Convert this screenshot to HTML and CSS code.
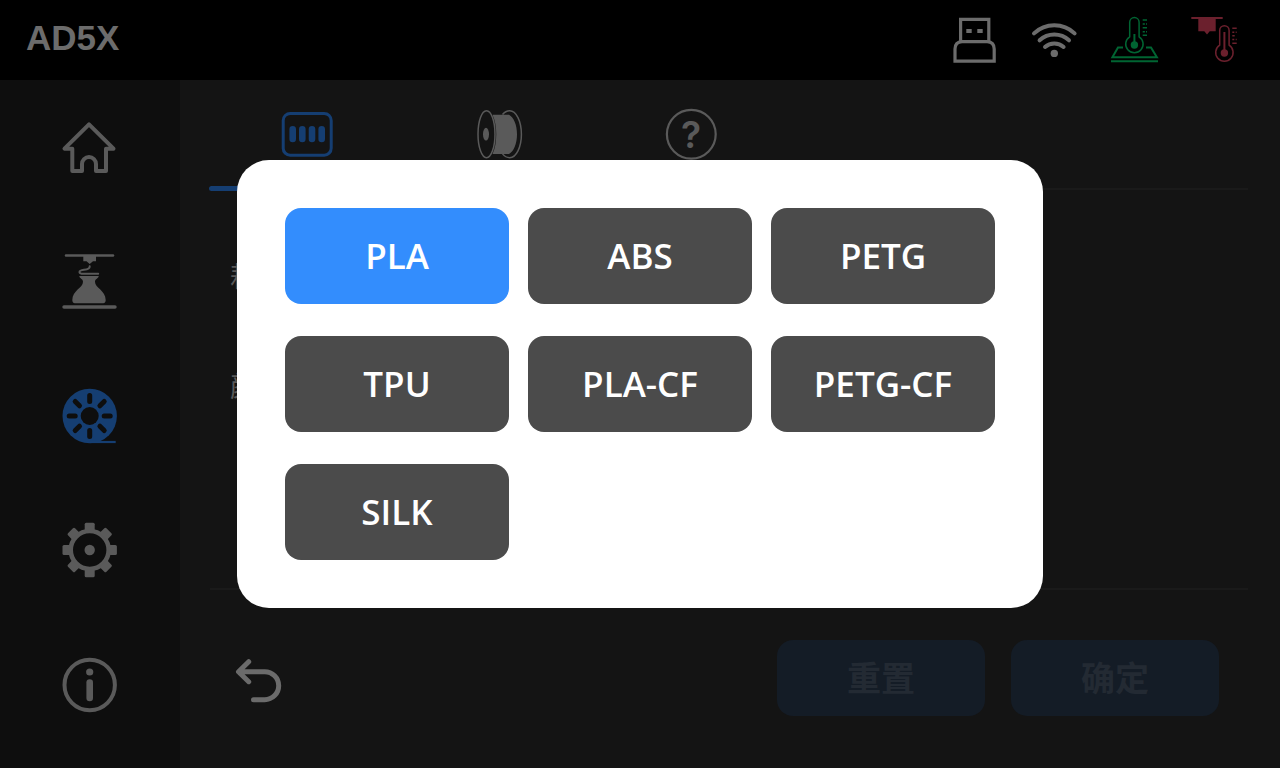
FILE: index.html
```
<!DOCTYPE html>
<html lang="zh-CN">
<head>
    <meta charset="UTF-8">
    <meta name="viewport" content="width=device-width, initial-scale=1.0">
    <title>AD5X</title>
    <link rel="stylesheet" href="styles.css">
</head>
<body>

<header class="topbar">
    <span class="model">AD5X</span>
    <div class="status">
        <!-- USB -->
        <svg class="status-icon" viewBox="0 0 48 48" fill="none" stroke="currentColor" stroke-width="3.2">
            <path d="M8.6 25V3.3h28.2V25"/>
            <path d="M3 45.2V33q0-7 7-7.400h25.200q7 .4 7 7.400v12.200z"/>
            <path d="M14.300 15h5.400M25.300 15h5.400" stroke-width="4"/>
        </svg>
        <!-- Wi-Fi -->
        <svg class="status-icon" viewBox="0 0 48 48" fill="none" stroke="currentColor" stroke-width="4" stroke-linecap="round">
            <path d="M2 17.400a29.500 29.500 0 0 1 40.600 0M7.600 24.300a21.500 21.500 0 0 1 29.400 0M13 31a13.800 13.800 0 0 1 18.600 0"/>
            <circle cx="22.300" cy="37.400" r="3.700" fill="currentColor" stroke="none"/>
        </svg>
        <!-- Mesa aquecida -->
        <svg class="status-icon bed" viewBox="0 0 48 48" fill="none" stroke="currentColor" stroke-width="1.500">
            <path d="M17.700 20.800V6.300a4.700 4.700 0 0 1 9.400 0v14.500a8.700 8.700 0 1 1-9.400 0z"/>
            <path d="M22.400 18v11" stroke-width="2"/>
            <circle cx="22.400" cy="29" r="3.700" fill="currentColor" stroke="none"/>
            <path d="M30.700 4H35M30.700 8h2.200M34 8h1M30.700 11.700H35M30.700 15.700h2.200M34 15.700h1M30.700 19.300H35"/>
            <path d="M11 31.400H6L.4 41.300h44.500L39 31.400h-5M-1 45.300h47" stroke-width="2"/>
        </svg>
        <!-- Bico -->
        <svg class="status-icon nozzle" viewBox="0 0 48 48" fill="none" stroke="currentColor" stroke-width="1.500">
            <path d="M-.7 2h31.400" stroke-width="2"/>
            <path d="M6.300 2h17.400v13.300h-6L15 18.600l-2.700-3.300h-6z" fill="currentColor" stroke="none"/>
            <path d="M27.700 29.200V14.400a4.700 4.700 0 0 1 9.400 0v14.800a8.700 8.700 0 1 1-9.400 0z"/>
            <path d="M32.400 16v21" stroke-width="2"/>
            <circle cx="32.400" cy="37" r="3.700" fill="currentColor" stroke="none"/>
            <path d="M40.300 12.300h4.400M40.300 16.300h2M43.700 16.300h1M40.300 19.700h2.400M40.300 23.500h2M43.700 23.500h1M40.300 27.300h4.400"/>
        </svg>
    </div>
</header>

<div class="layout">
    <nav class="sidebar">
        <a href="#" class="nav-item" aria-label="主页">
            <svg class="nav-icon" viewBox="0 0 56 56" fill="none" stroke="currentColor" stroke-width="4" stroke-linejoin="round">
                <path d="M27 5.300 2.500 29.700h7.800V52H20v-7a7 7 0 0 1 14 0v7h10V29.700h7.500z"/>
            </svg>
        </a>
        <a href="#" class="nav-item" aria-label="打印">
            <svg class="nav-icon" viewBox="0 0 56 56" fill="none" stroke="currentColor" stroke-linecap="round">
                <path d="M4 1.400h47" stroke-width="2.500"/>
                <path d="M21.300 2H34v5.300h-3L27.700 10l-3.200-2.700h-3.200z" fill="currentColor" stroke="none"/>
                <path d="M27.700 12.300c.5 5-10.200 2.200-10.200 5.700 0 2.600 4 1.700 18.700 1.700" stroke-width="2"/>
                <path d="M17.300 22h19.400c0 2.600-3.700 2.500-3.700 5.800 0 6.200 10.700 8.700 10.700 18.200 0 2-.8 3.200-2.500 3.200H12.800c-1.700 0-2.500-1.200-2.500-3.200C10.300 36.500 21 34 21 27.800c0-3.300-3.700-3.200-3.700-5.800z" fill="currentColor" stroke="none"/>
                <path d="M2 53h51" stroke-width="3.400"/>
            </svg>
        </a>
        <a href="#" class="nav-item active" aria-label="耗材">
            <svg class="nav-icon" viewBox="0 0 56 56">
                <circle cx="27.700" cy="28" r="27.200" fill="currentColor"/>
                <path d="M27.700 54h26" stroke="currentColor" stroke-width="2.200"/>
                <circle class="hole" cx="27.700" cy="28" r="9"/>
                <path class="slot" d="M27.700 7.500v6M27.700 42.500v6M7.200 28h6M42.200 28h6M13.200 13.500l4.300 4.300M37.900 38.200l4.300 4.300M42.200 13.500l-4.300 4.300M17.500 38.200l-4.300 4.300"/>
            </svg>
        </a>
        <a href="#" class="nav-item" aria-label="设置">
            <svg class="nav-icon" viewBox="0 0 56 56" fill="none" stroke="currentColor">
                <circle cx="27.700" cy="28" r="19" stroke-width="4.600"/>
                <g fill="currentColor" stroke="none">
                    <circle cx="27.700" cy="28" r="5.200"/>
                    <rect x="22.700" y=".8" width="10" height="8" rx="1.500"/>
                    <rect x="22.700" y="47.200" width="10" height="8" rx="1.500"/>
                    <rect x=".5" y="23" width="8" height="10" rx="1.500"/>
                    <rect x="46.900" y="23" width="8" height="10" rx="1.500"/>
                    <g transform="rotate(45 27.700 28)">
                        <rect x="22.700" y=".8" width="10" height="8" rx="1.500"/>
                        <rect x="22.700" y="47.200" width="10" height="8" rx="1.500"/>
                        <rect x=".5" y="23" width="8" height="10" rx="1.500"/>
                        <rect x="46.900" y="23" width="8" height="10" rx="1.500"/>
                    </g>
                </g>
            </svg>
        </a>
        <a href="#" class="nav-item" aria-label="信息">
            <svg class="nav-icon" viewBox="0 0 56 56" fill="none" stroke="currentColor">
                <circle cx="27.700" cy="28" r="25.200" stroke-width="4"/>
                <circle cx="27.700" cy="15" r="3.600" fill="currentColor" stroke="none"/>
                <path d="M27.700 25.500v15.400" stroke-width="6.600" stroke-linecap="round"/>
            </svg>
        </a>
    </nav>

    <main class="content">
        <div class="tabs">
            <button type="button" class="tab active" aria-label="料盒">
                <svg class="tab-icon" viewBox="0 0 56 56" fill="none" stroke="currentColor" stroke-linecap="round">
                    <rect x="4.200" y="7.500" width="48" height="41.700" rx="7" stroke-width="3"/>
                    <path d="M13.700 23.300v9.700M23.300 23.300v9.700M33 23.300v9.700M42.700 23.300v9.700" stroke-width="6.600"/>
                </svg>
            </button>
            <button type="button" class="tab" aria-label="料盘">
                <svg class="tab-icon" viewBox="0 0 56 56" fill="none" stroke="currentColor" stroke-width="1.500">
                    <ellipse cx="15.500" cy="28.200" rx="8.500" ry="23.500"/>
                    <ellipse cx="15" cy="28.200" rx="3" ry="6.400" fill="currentColor" stroke="none"/>
                    <path d="M21.500 8.700H38c4.700 2.500 8 10 8 19.500S42.700 45.500 38 48H21.500c5-10 5-29.300 0-39.300z" fill="currentColor" stroke="none"/>
                    <path d="M31.500 8.500C33.500 6 36 4.700 38.700 4.700c6.500 0 11.700 10.500 11.700 23.500s-5.200 23.500-11.700 23.500c-2.700 0-5.200-1.300-7.200-3.800"/>
                </svg>
            </button>
            <button type="button" class="tab" aria-label="帮助">
                <svg class="tab-icon" viewBox="0 0 56 56">
                    <circle cx="28.300" cy="28.300" r="24.400" fill="none" stroke="currentColor" stroke-width="2.200"/>
                    <text class="question" x="28" y="42" text-anchor="middle">?</text>
                </svg>
            </button>
        </div>

        <div class="fields">
            <div class="field">耗材</div>
            <div class="field">颜色</div>
        </div>

        <div class="actions">
            <button type="button" class="back-btn" aria-label="返回">
                <svg class="back-icon" viewBox="0 0 48 48" fill="none" stroke="currentColor" stroke-width="5" stroke-linecap="round" stroke-linejoin="round">
                    <path d="M12.700 3.700 2.500 13.700l10.200 10M3 13.700h25.700a14 14 0 0 1 0 28H17.500"/>
                </svg>
            </button>
            <button type="button" class="action-btn">重置</button>
            <button type="button" class="action-btn">确定</button>
        </div>
    </main>
</div>

<!-- Seleção de material -->
<div class="overlay">
    <div class="modal" role="dialog" aria-modal="true" aria-label="耗材">
        <button type="button" class="material selected">PLA</button>
        <button type="button" class="material">ABS</button>
        <button type="button" class="material">PETG</button>
        <button type="button" class="material">TPU</button>
        <button type="button" class="material">PLA-CF</button>
        <button type="button" class="material">PETG-CF</button>
        <button type="button" class="material">SILK</button>
    </div>
</div>

</body>
</html>
```
FILE: styles.css
```
* {
    box-sizing: border-box;
}
body {
    font-family: 'Open Sans', 'Noto Sans CJK SC', sans-serif;
    background-color: #141414;
    color: #5a5a5a;
    margin: 0;
    min-height: 100vh;
    display: flex;
    flex-direction: column;
}
button {
    font-family: inherit;
    border: none;
    padding: 0;
    background: none;
    color: inherit;
    cursor: pointer;
}
svg {
    display: block;
    overflow: visible;
}
.topbar {
    height: 80px;
    padding: 0 40px 0 26px;
    display: flex;
    justify-content: space-between;
    align-items: center;
    background-color: #000;
    color: #6c6c6c;
}
.model {
    font-family: 'Liberation Sans', Arial, sans-serif;
    font-size: 35px;
    font-weight: bold;
    line-height: 40px;
    padding-bottom: 4px;
}
.status {
    display: flex;
    gap: 32px;
}
.status-icon {
    width: 48px;
    height: 48px;
}
.bed {
    color: #006432;
}
.nozzle {
    color: #6b202d;
}
.layout {
    flex: 1;
    display: flex;
}
.sidebar {
    width: 180px;
    padding-bottom: 16px;
    display: flex;
    flex-direction: column;
    background-color: #0e0e0e;
}
.nav-item {
    flex: 1;
    display: flex;
    align-items: center;
    justify-content: center;
    color: #5a5a5a;
}
.nav-icon,
.tab-icon {
    width: 56px;
    height: 56px;
}
.nav-item.active,
.tab.active {
    color: #153e72;
}
.hole {
    fill: #0e0e0e;
}
.slot {
    stroke: #0e0e0e;
    stroke-width: 5;
    stroke-linecap: round;
}
.content {
    flex: 1;
    padding: 0 32px 0 30px;
    display: flex;
    flex-direction: column;
}
.tabs {
    height: 110px;
    display: flex;
    border-bottom: 2px solid #1a1a1a;
}
.tab {
    position: relative;
    width: 192px;
    height: 111px;
    display: flex;
    justify-content: center;
    padding: 26px 0 0 2px;
}
/* Indicador da aba ativa */
.tab.active::after {
    content: "";
    position: absolute;
    left: -1px;
    right: -1px;
    bottom: 0;
    height: 5px;
    border-radius: 3px;
    background-color: #153e72;
}
.question {
    font-family: 'Inter', sans-serif;
    font-size: 37px;
    font-weight: 600;
    fill: currentColor;
}
.fields {
    flex: 1;
    padding: 31px 20px;
}
.field {
    height: 110px;
    font-size: 28px;
    line-height: 110px;
}
.actions {
    height: 180px;
    padding: 50px 29px 50px 26px;
    display: flex;
    align-items: flex-start;
    gap: 26px;
    border-top: 2px solid #1a1a1a;
}
.back-btn {
    margin: 18px auto 0 0;
    color: #6b6b6b;
}
.back-icon {
    width: 48px;
    height: 48px;
}
.action-btn {
    width: 208px;
    height: 76px;
    padding-bottom: 4px;
    border-radius: 16px;
    background-color: #141c26;
    color: #232a33;
    font-size: 34px;
    font-weight: bold;
}
.overlay {
    position: fixed;
    inset: 0;
    display: flex;
    align-items: center;
    justify-content: center;
}
.modal {
    display: grid;
    grid-template-columns: repeat(3, 224px);
    gap: 32px 19px;
    padding: 48px;
    border-radius: 32px;
    background-color: #fff;
}
.material {
    height: 96px;
    padding-bottom: 2px;
    border-radius: 16px;
    background-color: #4b4b4b;
    color: #fff;
    font-size: 35px;
    font-weight: 600;
}
.material.selected {
    background-color: #338dfd;
}
```
